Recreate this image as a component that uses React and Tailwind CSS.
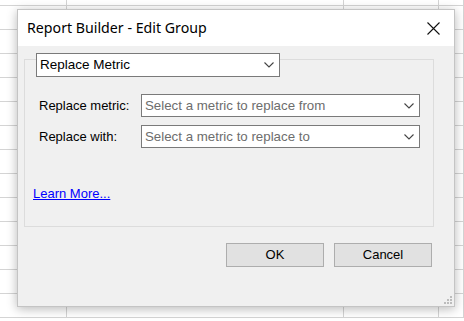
import React from 'react';

const cols = ['w-[67px]', 'w-[277px]', 'w-[95px]', 'w-[25px]'];
const rows = Array.from({ length: 14 });

function Chevron() {
  return (
    <svg width="10" height="6" viewBox="0 0 10 6" className="shrink-0">
      <path d="M0.5 0.5 L5 5 L9.5 0.5" fill="none" stroke="#444" strokeWidth="1.1" />
    </svg>
  );
}

function Select({ text, placeholder, className }) {
  return (
    <div className={`flex items-center justify-between bg-white border border-[#7a7a7a] pl-[3px] pr-[5px] ${className}`}>
      <span className={placeholder ? 'text-[#6d6d6d]' : 'text-black'}>{text}</span>
      <Chevron />
    </div>
  );
}

export default function App() {
  return (
    <div className="relative w-[464px] h-[321px] overflow-hidden bg-white font-['Liberation_Sans',Arial,sans-serif] text-[13px] text-black">
      {/* spreadsheet behind */}
      <div className="mt-[-18px] flex flex-col">
        {rows.map((_, r) => (
          <div key={r} className="flex h-[24px]">
            {cols.map((w, c) => (
              <div key={c} className={`${w} shrink-0 border-r border-b border-[#d4d4d4]`} />
            ))}
          </div>
        ))}
      </div>

      {/* dialog window */}
      <div className="absolute left-[17px] top-[9px] w-[438px] h-[298px] bg-[#f0f0f0] border border-[#c4c4c4] shadow-[0_2px_10px_rgba(0,0,0,0.28)] flex flex-col">
        <div className="h-[36px] bg-white flex items-center justify-between pl-[9px] pr-[14px]">
          <span className="font-['Segoe_UI','Noto_Sans',sans-serif] text-[14.2px] text-black">Report Builder - Edit Group</span>
          <svg width="13" height="13" viewBox="0 0 13 13">
            <path d="M0.5 0.5 L12.5 12.5 M12.5 0.5 L0.5 12.5" stroke="#111" strokeWidth="1.1" fill="none" />
          </svg>
        </div>

        <div className="pl-[6px] pt-[13px]">
          <div className="relative w-[410px] h-[168px] border border-[#dcdcdc] pt-[34px] pl-[14px]">
            <Select text="Replace Metric" className="absolute left-[11px] top-[-7px] w-[244px] h-[24px] text-[13.5px]" />

            <div className="flex flex-col gap-[8px]">
              <div className="flex items-center">
                <span className="w-[102px]">Replace metric:</span>
                <Select text="Select a metric to replace from" placeholder className="w-[279px] h-[23px] text-[13.3px]" />
              </div>
              <div className="flex items-center">
                <span className="w-[102px]">Replace with:</span>
                <Select text="Select a metric to replace to" placeholder className="w-[279px] h-[23px] text-[13.3px]" />
              </div>
            </div>

            <a className="absolute left-[8px] top-[124px] text-[#0000ff] underline">Learn More...</a>
          </div>
        </div>

        <div className="flex justify-end gap-[10px] pr-[22px] mt-[16px]">
          <button className="w-[98px] h-[24px] bg-[#e1e1e1] border border-[#adadad] text-[13px]">OK</button>
          <button className="w-[98px] h-[24px] bg-[#e1e1e1] border border-[#adadad] text-[13px]">Cancel</button>
        </div>

        <svg width="10" height="10" viewBox="0 0 10 10" className="absolute right-[1px] bottom-[1px]">
          <rect x="7" y="1" width="2" height="2" fill="#bcbcbc" />
          <rect x="4" y="4" width="2" height="2" fill="#bcbcbc" />
          <rect x="7" y="4" width="2" height="2" fill="#bcbcbc" />
          <rect x="1" y="7" width="2" height="2" fill="#bcbcbc" />
          <rect x="4" y="7" width="2" height="2" fill="#bcbcbc" />
          <rect x="7" y="7" width="2" height="2" fill="#bcbcbc" />
        </svg>
      </div>
    </div>
  );
}
